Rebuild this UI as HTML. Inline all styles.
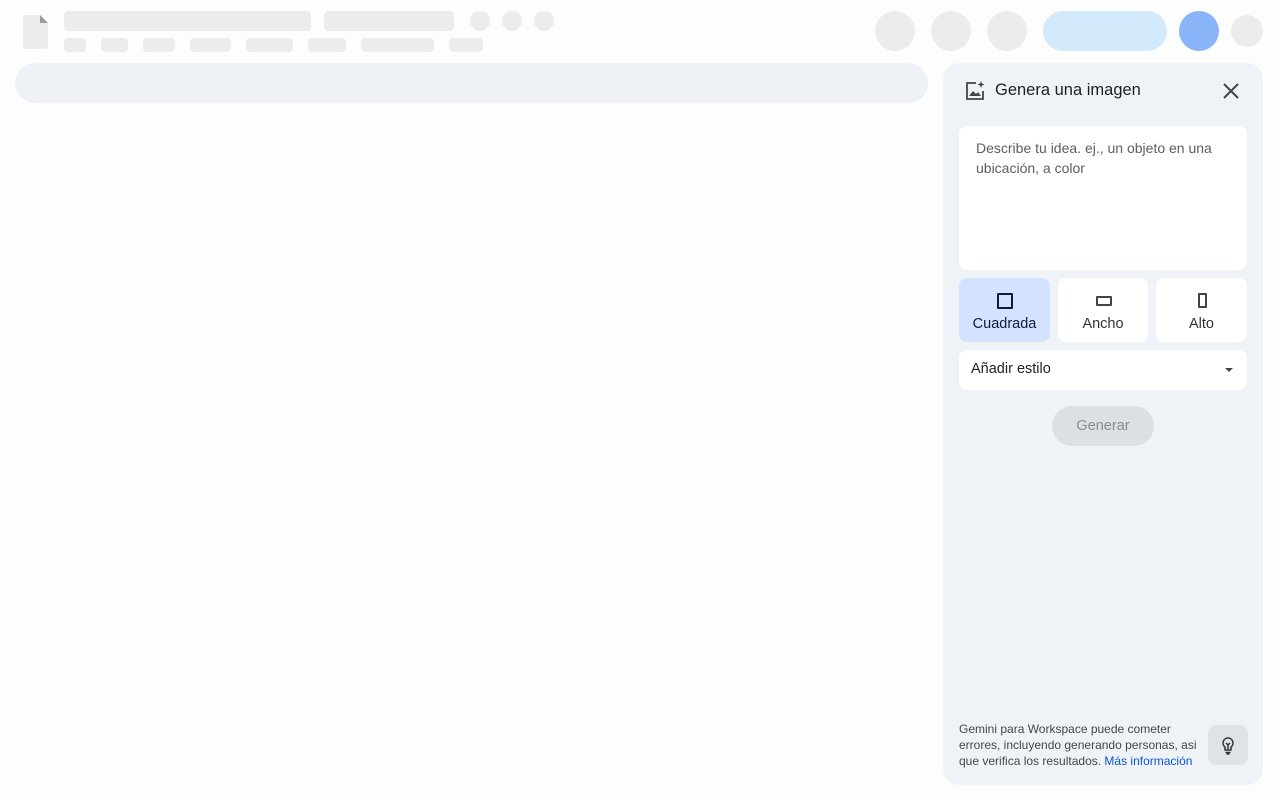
<!DOCTYPE html>
<html><head><style>
body{margin:0;width:1279px;height:800px;background:#fdfdfd;font-family:"Liberation Sans",Arial,sans-serif;position:relative;overflow:hidden}
.a{position:absolute}
.g{background:#ececec;border-radius:4px}
.c{background:#ececec;border-radius:50%}
</style></head><body>
<div class="a" style="left:23px;top:15px;width:25px;height:34px;background:#ececec;border-radius:2px"></div>
<div class="a" style="left:40px;top:15px;width:0;height:0;border-top:8px solid #fdfdfd;border-left:8px solid #9a9a9a"></div>
<div class="a g" style="left:64px;top:11px;width:247px;height:20px"></div>
<div class="a g" style="left:324px;top:11px;width:130px;height:20px"></div>
<div class="a c" style="left:470px;top:11px;width:20px;height:20px"></div>
<div class="a c" style="left:502px;top:11px;width:20px;height:20px"></div>
<div class="a c" style="left:534px;top:11px;width:20px;height:20px"></div>
<div class="a g" style="left:64px;top:38px;width:22px;height:14px"></div>
<div class="a g" style="left:101px;top:38px;width:27px;height:14px"></div>
<div class="a g" style="left:143px;top:38px;width:32px;height:14px"></div>
<div class="a g" style="left:190px;top:38px;width:41px;height:14px"></div>
<div class="a g" style="left:246px;top:38px;width:47px;height:14px"></div>
<div class="a g" style="left:308px;top:38px;width:38px;height:14px"></div>
<div class="a g" style="left:361px;top:38px;width:73px;height:14px"></div>
<div class="a g" style="left:449px;top:38px;width:34px;height:14px"></div>
<div class="a c" style="left:875px;top:11px;width:40px;height:40px"></div>
<div class="a c" style="left:931px;top:11px;width:40px;height:40px"></div>
<div class="a c" style="left:987px;top:11px;width:40px;height:40px"></div>
<div class="a" style="left:1043px;top:11px;width:124px;height:40px;border-radius:20px;background:#d3eafd"></div>
<div class="a" style="left:1179px;top:11px;width:40px;height:40px;border-radius:50%;background:#8ab4f8"></div>
<div class="a c" style="left:1231px;top:15px;width:32px;height:32px"></div>
<div class="a" style="left:15px;top:63px;width:913px;height:40px;border-radius:20px;background:#eef2f7"></div>

<div class="a" style="left:943px;top:63px;width:320px;height:722px;border-radius:16px;background:#eff3f8"></div>
<svg class="a" style="left:964px;top:80px" width="22" height="22" viewBox="0 0 22 22" fill="none" stroke="#444746" stroke-width="1.8"><path d="M12 3H3v16h16v-8"/><path d="M5 16l4-5 3 3 2-2 3 4z" fill="#444746" stroke="none"/><path d="M17 1l1 2.5 2.5 1-2.5 1-1 2.5-1-2.5-2.5-1 2.5-1z" fill="#444746" stroke="none"/></svg>
<div class="a" style="left:995px;top:81px;font-size:16.5px;color:#1f1f1f">Genera una imagen</div>
<svg class="a" style="left:1222px;top:82px" width="18" height="18" viewBox="0 0 18 18" stroke="#444746" stroke-width="2"><path d="M2 2l14 14M16 2L2 16"/></svg>
<div class="a" style="left:959px;top:126px;width:288px;height:144px;border-radius:8px;background:#fff"></div>
<div class="a" style="left:976px;top:138px;width:260px;font-size:14px;line-height:20px;color:#5e5e5e">Describe tu idea. ej., un objeto en una ubicación, a color</div>
<div class="a" style="left:959px;top:278px;width:91px;height:64px;border-radius:8px;background:#d3e3fd"></div>
<div class="a" style="left:1058px;top:278px;width:90px;height:64px;border-radius:8px;background:#fff"></div>
<div class="a" style="left:1156px;top:278px;width:91px;height:64px;border-radius:8px;background:#fff"></div>
<div class="a" style="left:997px;top:293px;width:12px;height:12px;border:2px solid #0b1d3a;border-radius:1px"></div>
<div class="a" style="left:1096px;top:296px;width:12px;height:6px;border:2px solid #444;border-radius:1px"></div>
<div class="a" style="left:1198px;top:293px;width:5px;height:11px;border:2px solid #444;border-radius:1px"></div>
<div class="a" style="left:959px;top:316px;width:91px;text-align:center;font-size:14.5px;color:#0b1d3a">Cuadrada</div>
<div class="a" style="left:1058px;top:316px;width:90px;text-align:center;font-size:14.5px;color:#333">Ancho</div>
<div class="a" style="left:1156px;top:316px;width:91px;text-align:center;font-size:14.5px;color:#333">Alto</div>
<div class="a" style="left:959px;top:350px;width:288px;height:40px;border-radius:8px;background:#fff"></div>
<div class="a" style="left:971px;top:361px;font-size:14.5px;color:#1f1f1f">Añadir estilo</div>
<div class="a" style="left:1225px;top:368px;width:0;height:0;border-left:4px solid transparent;border-right:4px solid transparent;border-top:4px solid #444"></div>
<div class="a" style="left:1052px;top:406px;width:102px;height:40px;border-radius:20px;background:#dcdfe3;text-align:center;line-height:40px;font-size:14.5px;color:#8a8d91">Generar</div>
<div class="a" style="left:959px;top:721px;width:245px;font-size:12px;line-height:16px;color:#444746">Gemini para Workspace puede cometer errores, incluyendo generando personas, asi que verifica los resultados. <span style="color:#0b57d0">Más información</span></div>
<div class="a" style="left:1208px;top:725px;width:40px;height:40px;border-radius:8px;background:#dfe3e8"></div>
<svg class="a" style="left:1220px;top:737px" width="16" height="18" viewBox="0 0 16 18" fill="none" stroke="#333" stroke-width="1.5"><path d="M8 1a5 5 0 0 0-3 9v3h6v-3a5 5 0 0 0-3-9z"/><path d="M5.5 15.5h5M6.5 17h3M6 6l2 2 2-2M8 8v4"/></svg>
</body></html>
